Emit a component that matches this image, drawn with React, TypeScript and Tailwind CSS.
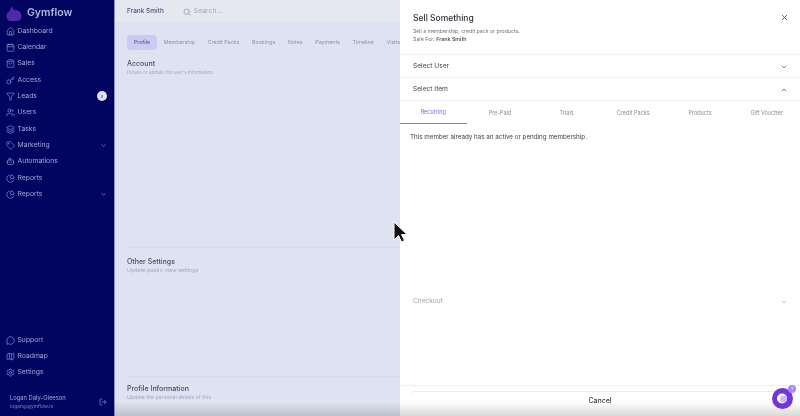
import React from "react";
import { Home, Calendar, ShoppingBag, Key, Filter, Users, Layers, Tag, Bot, PieChart, ChevronDown, ChevronUp, X, Search, MessageCircle, Map, Settings, LogOut } from "lucide-react";

const items: [string, any, boolean?][] = [
  ["Dashboard", Home], ["Calendar", Calendar], ["Sales", ShoppingBag], ["Access", Key], ["Leads", Filter], ["Users", Users], ["Tasks", Layers],
  ["Marketing", Tag, true], ["Automations", Bot], ["Reports", PieChart], ["Reports", PieChart, true],
];
const bottom: [string, any][] = [["Support", MessageCircle], ["Roadmap", Map], ["Settings", Settings]];

function NavRow({ label, Icon, chevron, badge }: { label: string; Icon: any; chevron?: boolean; badge?: boolean }) {
  return (
    <div className="flex h-[16.33px] items-center pl-[6px] pr-[7px] text-[#a3a7d8]">
      <Icon size={9} strokeWidth={1.6} className="shrink-0 text-[#a0a4dc]" />
      <span className="ml-[2.5px] flex-1 text-[6.8px] leading-none">{label}</span>
      {chevron && <ChevronDown size={7} strokeWidth={2} />}
      {badge && <span className="flex h-[10px] w-[10px] items-center justify-center rounded-full bg-[#e2dff5]"><span className="h-[3px] w-[1.5px] bg-[#9c94d8]" /></span>}
    </div>
  );
}

function Section({ title, sub, className }: { title: string; sub: string; className: string }) {
  return (
    <section className={"ml-[12px] " + className}>
      <div className="text-[7px] font-medium leading-[9px] text-[#4a4c5e]">{title}</div>
      <div className="mt-[1px] whitespace-nowrap leading-[7px] text-[#a5a8be]">{sub}</div>
    </section>
  );
}

export default function App() {
  return (
    <div className="relative flex h-[416px] w-[800px] overflow-hidden bg-white font-['Inter',sans-serif]">
      <aside className="flex w-[114px] shrink-0 flex-col bg-[#01055f] pt-[3px] blur-[0.6px]">
        <div className="flex h-[20px] items-center gap-[5px] pl-[6px]">
          <svg width="16" height="15" viewBox="0 0 16 15"><path d="M0.5 10c0-3 2-4 3.500-5 0-2 1-4 3-4.500-1 2 0 3 2 3.500 4 0 6.500 3 6.500 6 0 3-2 5-5 5H5c-2.500 0-4.500-2-4.500-5z" fill="#4f2aa8" /></svg>
          <span className="text-[10.5px] font-semibold text-[#b3b6e0]">Gymflow</span>
        </div>
        <div className="flex flex-col">
          {items.map(([l, I, c]) => <NavRow key={l + String(c)} label={l} Icon={I} chevron={c} badge={l === "Leads"} />)}
        </div>
        <div className="mt-auto flex flex-col">
          {bottom.map(([l, I]) => <NavRow key={l} label={l} Icon={I} />)}
        </div>
        <div className="mb-[6px] mt-[13px] flex items-center pl-[10px] pr-[7px]">
          <div className="flex-1 text-[5px] leading-[8px] text-[#a9acd8]">
            <div className="text-[5.8px]">Logan Daly-Gleeson</div>
            <div className="text-[#7e82bd]">logan@gymflow.io</div>
          </div>
          <LogOut size={8} className="text-[#8f93cc]" />
        </div>
      </aside>

      <main className="flex w-[286px] shrink-0 flex-col border-l border-[#8d93c8] bg-[#dfe2f0] blur-[0.6px]">
        <div className="flex h-[22px] items-center bg-[#e6e8f1] pl-[12px] pt-[1px]">
          <span className="text-[6.5px] font-medium text-[#4c5080]">Frank Smith</span>
          <Search size={8} className="ml-[19px] text-[#8a8d9e]" />
          <span className="ml-[3px] text-[6.8px] text-[#a3a6b8]">Search...</span>
        </div>
        <div className="mt-[13px] flex h-[15px] items-center gap-[12.7px] overflow-hidden whitespace-nowrap pl-[12px] text-[5.3px] text-[#8e92ad]">
          <span className="-mr-[6px] flex h-[15px] w-[31px] items-center justify-center rounded-[4px] bg-[#c9cbf3] font-medium text-[#5f62a8]">Profile</span>
          <span>Membership</span><span>Credit Packs</span><span>Bookings</span><span>Notes</span><span>Payments</span><span>Timeline</span><span>Visits</span>
        </div>
        <Section title="Account" sub="Details or update the user's information" className="mt-[9px] text-[4.6px]" />
        <Section title="Other Settings" sub="Update public-view settings" className="mt-[171px] border-t border-[#d8dbeb] pt-[9px] text-[5.4px]" />
        <Section title="Profile Information" sub="Update the personal details of this" className="mt-[102px] border-t border-[#d8dbeb] pt-[7px] text-[5.2px]" />
      </main>

      <div className="flex w-[400px] shrink-0 flex-col bg-white text-[#3f3f46] blur-[0.4px]">
        <div className="relative h-[55px] border-b border-[#f0f0f2] pl-[13px] pt-[12px]">
          <div className="text-[8.5px] font-medium leading-[12px] text-[#2f2f38]">Sell Something</div>
          <div className="mt-[3px] text-[5.2px] leading-[8px] text-[#71717a]">Sell a membership, credit pack or products.</div>
          <div className="text-[5.3px] leading-[8px] text-[#71717a]">Sale For: <span className="font-medium text-[#3f3f46]">Frank Smith</span></div>
          <X size={9} strokeWidth={2} className="absolute right-[11px] top-[13px]" />
        </div>
        <div className="flex h-[23px] items-center justify-between border-b border-[#f0f0f2] pl-[13px] pr-[12px] pt-[2px] text-[6.6px]">
          <span>Select User</span><ChevronDown size={8} />
        </div>
        <div className="flex h-[23px] items-center justify-between border-b border-[#f0f0f2] pl-[13px] pr-[12px] pt-[2px] text-[6.6px]">
          <span>Select Item</span><ChevronUp size={8} />
        </div>
        <div className="grid h-[23px] grid-cols-6 text-center text-[5.5px] text-[#8a8a94]">
          {["Recurring", "Pre-Paid", "Trials", "Credit Packs", "Products", "Gift Voucher"].map((t, i) => (
            <div key={t} className={"flex items-center justify-center pt-[1px] " + (i === 0 ? "border-b border-[#9b6ee8] text-[#8b5cf6]" : "")}>{t}</div>
          ))}
        </div>
        <div className="pl-[10px] pt-[8px] text-[6.25px] leading-[10px] text-[#3f3f46]">This member already has an active or pending membership.</div>
        <div className="mt-[155px] flex h-[10px] items-center justify-between pl-[13px] pr-[12px] text-[6.6px] text-[#a1a1aa]">
          <span>Checkout</span><ChevronDown size={8} />
        </div>
        <div className="mt-auto flex h-[31px] items-start border-t border-[#f0f0f2] px-[11px] pt-[5px]">
          <div className="flex h-[25px] w-full items-center justify-center rounded-t-[4px] border-t border-[#ececf0] pb-[5px] text-[7px] font-medium text-[#3f3f46]">Cancel</div>
        </div>
      </div>

      <div className="absolute bottom-0 left-[114px] right-0 h-[14px] bg-gradient-to-b from-transparent to-black/15" />

      <div className="absolute bottom-[7px] right-[7px] flex h-[21px] w-[21px] items-center justify-center rounded-full bg-[#7436dc]">
        <svg width="13" height="13" viewBox="0 0 13 13"><circle cx="6" cy="6.500" r="5" fill="#fff" /><circle cx="7.500" cy="7" r="3.500" fill="#c9b8f5" /></svg>
        <span className="absolute right-[-3px] top-[-3px] flex h-[8px] w-[8px] items-center justify-center rounded-full bg-[#a78bfa] text-[4px] text-white">1</span>
      </div>
      <svg className="absolute left-[393px] top-[221px]" width="14" height="23" viewBox="0 0 14 23">
        <path d="M1 1v18l4.500-4.500 3 6.500 3-1.500-3-6h5.500z" fill="#111" stroke="#fff" strokeWidth="1" />
      </svg>
    </div>
  );
}
